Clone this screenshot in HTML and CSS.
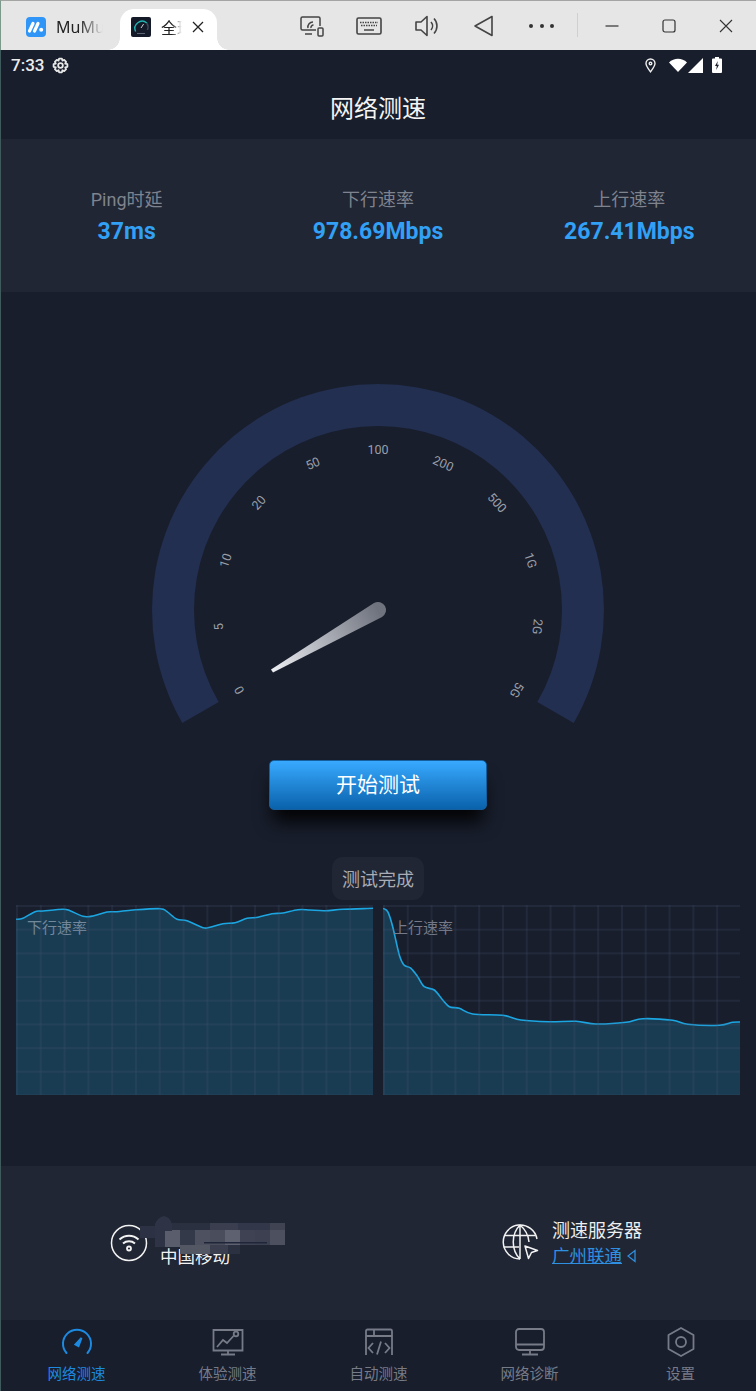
FILE: index.html
```html
<!DOCTYPE html>
<html lang="en">
<head>
    <meta charset="UTF-8">
    <meta name="viewport" content="width=device-width, initial-scale=1.0">
    <title>网络测速</title>
    <link rel="stylesheet" href="styles.css">
</head>
<body>
    <div class="titlebar">
        <div class="tab">
            <svg class="tab-icon" viewBox="0 0 20 20"><rect width="20" height="20" rx="4" fill="#2f95f7"/><path d="M3.500 14 L7 6.500 M8.500 14 L12 6.500" stroke="#fff" stroke-width="3.200" stroke-linecap="round"/><circle cx="15.200" cy="12.800" r="2" fill="#fff"/></svg>
            <span class="tab-name">MuMu</span>
        </div>
        <div class="tab tab-active">
            <svg class="tab-icon" viewBox="0 0 20 20"><rect width="20" height="20" rx="2" fill="#141a28"/><path d="M4.600 14.500 A7.200 7.200 0 0 1 15.800 6" fill="none" stroke="#1fb5b0" stroke-width="1.400"/><path d="M15.800 6 A7.200 7.200 0 0 1 16.400 13" fill="none" stroke="#3d4a5c" stroke-width="1.400"/><path d="M10 11 L12.600 7" stroke="#c8ccd4" stroke-width="1"/><rect x="6" y="16" width="8" height="1" fill="#5a6474"/></svg>
            <span class="tab-name tab-name-short">全球</span>
            <svg class="tab-close" viewBox="0 0 12 12"><path d="M1 1 L11 11 M11 1 L1 11" stroke="#222" stroke-width="1.300"/></svg>
        </div>
        <div class="tools">
            <div class="tool"><svg width="26" height="24" viewBox="0 0 26 24" fill="none" stroke="#444" stroke-width="1.500"><path d="M17 16 H3.500 A1.500 1.500 0 0 1 2 14.500 V4.500 A1.500 1.500 0 0 1 3.500 3 H19.500 A1.500 1.500 0 0 1 21 4.500 V12"/><path d="M6 20 H13"/><path d="M9 14 A5 5 0 0 1 14 8 M12 14 A2.500 2.500 0 0 1 14.500 11"/><rect x="19" y="14" width="5" height="8" rx="1"/></svg></div>
            <div class="tool"><svg width="26" height="20" viewBox="0 0 26 20" fill="none" stroke="#444"><rect x="1" y="2" width="24" height="16" rx="1.500" stroke-width="1.600"/><path d="M4 6.500 H22 M5 9.500 H21" stroke-width="1.600" stroke-dasharray="1.500 1"/><path d="M8 14 H18" stroke-width="1.500"/></svg></div>
            <div class="tool"><svg width="26" height="24" viewBox="0 0 26 24" fill="none" stroke="#444" stroke-width="1.600" stroke-linejoin="round"><path d="M2 8 H7 L13 2.500 V21.500 L7 16 H2 Z"/><path d="M17 8 A6 6 0 0 1 17 16 M20 4.500 A11 11 0 0 1 20 19.500"/></svg></div>
            <div class="tool"><svg width="22" height="24" viewBox="0 0 22 24" fill="none" stroke="#444" stroke-width="1.600" stroke-linejoin="round"><path d="M19 2.500 V21.500 L2 12 Z"/></svg></div>
            <div class="tool tool-dots"><span></span><span></span><span></span></div>
        </div>
        <div class="divider"></div>
        <div class="controls">
            <div class="control"><svg width="14" height="14" viewBox="0 0 14 14"><path d="M0.500 7 H13.500" stroke="#333" stroke-width="1.200"/></svg></div>
            <div class="control"><svg width="14" height="14" viewBox="0 0 14 14"><rect x="1" y="1" width="12" height="12" rx="2" fill="none" stroke="#333" stroke-width="1.200"/></svg></div>
            <div class="control"><svg width="14" height="14" viewBox="0 0 14 14"><path d="M1 1 L13 13 M13 1 L1 13" stroke="#333" stroke-width="1.100"/></svg></div>
        </div>
    </div>

    <div class="screen">
        <div class="statusbar">
            <span class="clock">7:33</span>
            <svg class="gear" width="17" height="17" viewBox="0 0 16 16" fill="none" stroke="#e8e8e8" stroke-width="1.700"><path d="M6.700 1.500 H9.300 L9.800 3.400 L11.500 2.700 L13.300 4.500 L12.400 6.200 L14.500 6.800 V9.200 L12.400 9.800 L13.300 11.500 L11.500 13.300 L9.800 12.400 L9.300 14.500 H6.700 L6.200 12.400 L4.500 13.300 L2.700 11.500 L3.600 9.800 L1.500 9.200 V6.800 L3.600 6.200 L2.700 4.500 L4.500 2.700 L6.200 3.400 Z" stroke-linejoin="round"/><circle cx="8" cy="8" r="2.200"/></svg>
            <div class="status-icons">
                <svg class="status-pin" width="11" height="15" viewBox="0 0 11 15" fill="none" stroke="#eee" stroke-width="1.400"><path d="M5.500 13.800 C3 10.500 1 8 1 5.500 A4.500 4.500 0 0 1 10 5.500 C10 8 8 10.500 5.500 13.800 Z"/><circle cx="5.500" cy="5.500" r="1.300"/></svg>
                <svg class="status-wifi" width="18" height="14" viewBox="0 0 18 14"><path d="M0 4.500 C5 -0.500 13 -0.500 18 4.500 L9 14 Z" fill="#fff"/></svg>
                <svg class="status-signal" width="15" height="15" viewBox="0 0 15 15"><path d="M15 0 V15 H0 Z" fill="#fff"/></svg>
                <svg class="status-battery" width="10" height="16" viewBox="0 0 10 16"><path d="M3 0 H7 V1.500 H9 A1 1 0 0 1 10 2.500 V15 A1 1 0 0 1 9 16 H1 A1 1 0 0 1 0 15 V2.500 A1 1 0 0 1 1 1.500 H3 Z" fill="#fff"/><path d="M5.800 4 L3 9 H4.800 L4.200 13 L7 7.800 H5.200 Z" fill="#181e2c"/></svg>
            </div>
        </div>

        <h1 class="page-title">网络测速</h1>

        <div class="stats">
            <div class="stat"><div class="stat-label">Ping时延</div><div class="stat-value">37ms</div></div>
            <div class="stat"><div class="stat-label">下行速率</div><div class="stat-value">978.69Mbps</div></div>
            <div class="stat"><div class="stat-label">上行速率</div><div class="stat-value">267.41Mbps</div></div>
        </div>

        <div class="main">
            <svg class="gauge" width="476" height="360" viewBox="140 380 476 360">
                <defs>
                    <linearGradient id="needle" gradientUnits="userSpaceOnUse" x1="272" y1="671" x2="378" y2="610">
                        <stop offset="0" stop-color="#eceef2"/>
                        <stop offset="1" stop-color="#6f737e"/>
                    </linearGradient>
                </defs>
                <path d="M182.300 723 A226 226 0 1 1 573.700 723 L537.300 702 A184 184 0 1 0 218.700 702 Z" fill="#222f50"/>
                <g class="gauge-labels">
                    <text x="378" y="454" transform="rotate(-120 378 610)">0</text>
                    <text x="378" y="454" transform="rotate(-96 378 610)">5</text>
                    <text x="378" y="454" transform="rotate(-72 378 610)">10</text>
                    <text x="378" y="454" transform="rotate(-48 378 610)">20</text>
                    <text x="378" y="454" transform="rotate(-24 378 610)">50</text>
                    <text x="378" y="454">100</text>
                    <text x="378" y="454" transform="rotate(24 378 610)">200</text>
                    <text x="378" y="454" transform="rotate(48 378 610)">500</text>
                    <text x="378" y="454" transform="rotate(72 378 610)">1G</text>
                    <text x="378" y="454" transform="rotate(96 378 610)">2G</text>
                    <text x="378" y="454" transform="rotate(120 378 610)">5G</text>
                </g>
                <path d="M271 669.500 L374 603 A8 8 0 0 1 382 617 L273 672.500 Z" fill="url(#needle)"/>
            </svg>

            <button class="start-btn">开始测试</button>
            <div class="done-pill">测试完成</div>

            <div class="charts">
                <div class="chart"><svg id="chartDown" viewBox="0 0 357 190" width="357" height="190"></svg><span class="chart-label">下行速率</span></div>
                <div class="chart"><svg id="chartUp" viewBox="0 0 357 190" width="357" height="190"></svg><span class="chart-label chart-label-up">上行速率</span></div>
            </div>
        </div>

        <div class="info">
            <div class="info-item info-left">
                <svg width="38" height="38" viewBox="0 0 38 38" fill="none" stroke="#f2f2f2" stroke-width="1.500"><circle cx="19" cy="19" r="17.500"/><path d="M9.500 15.500 C15 10.500 23 10.500 28.500 15.500 M13 19.500 C16.500 16.500 21.500 16.500 25 19.500" stroke-width="2"/><circle cx="19" cy="24.500" r="2" stroke-width="1.800"/></svg>
                <div class="carrier">中国移动</div>
            </div>
            <div class="info-item info-right">
                <svg width="37" height="37" viewBox="0 0 37 37" fill="none" stroke="#f2f2f2" stroke-width="1.500"><path d="M35 15 A17 17 0 1 0 18 35"/><path d="M18 1 C9 10 9 26 18 35 M18 1 C24 6 26.500 12 27 18 M18 1 V35 M2.500 11.500 H33.500 M1.500 23 H17"/><path d="M23 22 L35.500 26.500 L29.500 28.500 L26.500 34.500 Z" fill="#202634" stroke-linejoin="round"/></svg>
                <div>
                    <div class="server-title">测速服务器</div>
                    <div class="server-row"><a class="server-link">广州联通</a><svg width="9" height="14" viewBox="0 0 9 14" fill="none" stroke="#2f8fe0" stroke-width="1.300"><path d="M8 1.500 V12.500 L1 7 Z"/></svg></div>
                </div>
            </div>
            <svg class="mosaic" width="148" height="42" viewBox="138 1215 148 42">
                <rect x="140" y="1226" width="16" height="12" fill="#2c3243"/>
                <rect x="172" y="1223" width="38" height="8" fill="#2b3040"/>
                <rect x="210" y="1223" width="28" height="8" fill="#3a3e4e"/>
                <rect x="238" y="1223" width="32" height="8" fill="#32374a"/>
                <rect x="270" y="1223" width="15" height="8" fill="#3f4352"/>
                <rect x="165" y="1230" width="15" height="17" fill="#5a5e6c"/>
                <rect x="180" y="1230" width="15" height="15" fill="#34394a"/>
                <rect x="195" y="1230" width="15" height="15" fill="#4e5260"/>
                <rect x="210" y="1230" width="15" height="15" fill="#4a4e5c"/>
                <rect x="225" y="1230" width="15" height="15" fill="#5e616f"/>
                <rect x="240" y="1230" width="15" height="15" fill="#3e4252"/>
                <rect x="255" y="1230" width="15" height="15" fill="#3c4050"/>
                <rect x="270" y="1230" width="15" height="15" fill="#4d515f"/>
                <rect x="180" y="1245" width="30" height="9" fill="#535764"/>
                <rect x="210" y="1245" width="18" height="9" fill="#3a3e4e"/>
                <rect x="228" y="1245" width="12" height="9" fill="#2c3142"/>
                <rect x="204" y="1242" width="63" height="1.500" fill="#20263a"/>
                <path d="M155 1247 V1224 Q158 1217 164 1216 Q170 1217 172 1224 V1231 H165 V1247 Z" fill="#2e3445"/>
            </svg>
        </div>

        <div class="tabbar">
            <div class="nav-item nav-active">
                <svg width="32" height="28" viewBox="0 0 32 28" fill="none" stroke="#1c8ae0" stroke-width="2"><path d="M5.500 25 A14 14 0 1 1 26.500 25" stroke-linecap="round"/><path d="M14.500 16.500 L20.500 10 L17.500 18 Z" fill="#1c8ae0"/></svg>
                <span>网络测速</span>
            </div>
            <div class="nav-item">
                <svg width="32" height="28" viewBox="0 0 32 28" fill="none" stroke="#777b88" stroke-width="1.800"><path d="M22 2 H30.500 V22.500 H1.500 V2 H30.500"/><path d="M5 19 L11 12 L15 15 L21.500 8"/><circle cx="24" cy="6" r="2.300"/><path d="M16 22.500 V26 M9 26.500 H23"/></svg>
                <span>体验测速</span>
            </div>
            <div class="nav-item">
                <svg width="32" height="28" viewBox="0 0 32 28" fill="none" stroke="#777b88" stroke-width="1.800"><path d="M3 27 V3 A1.500 1.500 0 0 1 4.500 1.500 H27.500 A1.500 1.500 0 0 1 29 3 V27"/><path d="M3 8 H29 M11 1.500 V8"/><path d="M10 15 L5.500 20 L10 25 M22 15 L26.500 20 L22 25 M18 13.500 L14 26.500"/></svg>
                <span>自动测速</span>
            </div>
            <div class="nav-item">
                <svg width="32" height="28" viewBox="0 0 32 28" fill="none" stroke="#777b88" stroke-width="1.800"><rect x="2" y="1" width="28" height="21" rx="3"/><path d="M2 16.500 H30 M16 22 V26 M8 26.500 H24"/></svg>
                <span>网络诊断</span>
            </div>
            <div class="nav-item">
                <svg width="32" height="30" viewBox="0 0 32 30" fill="none" stroke="#777b88" stroke-width="1.800"><path d="M16 1 L28.500 8 V22 L16 29 L3.500 22 V8 Z" stroke-linejoin="round"/><circle cx="16" cy="15" r="5"/></svg>
                <span>设置</span>
            </div>
        </div>
    </div>

    <script>
        const downData = [[0,14.3],[7,13.3],[19,6.7],[27,6],[47,4.3],[54,5.7],[67,11.3],[77,11],[91,7],[101,6.7],[117,5],[144,3.7],[151,6.7],[161,14.3],[171,15.7],[187,22.7],[194,22.3],[207,18.7],[219,17.7],[231,13.3],[242,12.3],[256,8.7],[267,8],[282,4.7],[294,5],[309,5.7],[327,4.3],[357,3.3]];
        const upData = [[0,3.3],[4.7,6.7],[9.7,21.7],[16.3,50],[21,60],[28,63.3],[34.7,71.7],[41.3,81.7],[51.3,85],[59.7,95],[66.3,101.7],[76.3,103.3],[89.7,109],[119.7,110.3],[138,115],[166.3,116.7],[193,116.3],[213,119],[243,117.3],[259.7,113.7],[289.7,115.3],[304.7,119.3],[336.3,120.3],[349.7,117.3],[357,117]];

        // catmull-rom through the samples
        function smooth(points) {
            let d = `M${points[0][0]} ${points[0][1]}`;
            for (let i = 0; i < points.length - 1; i++) {
                const p0 = points[i - 1] || points[i];
                const p1 = points[i];
                const p2 = points[i + 1];
                const p3 = points[i + 2] || p2;
                const c1x = p1[0] + (p2[0] - p0[0]) / 6;
                const c1y = p1[1] + (p2[1] - p0[1]) / 6;
                const c2x = p2[0] - (p3[0] - p1[0]) / 6;
                const c2y = p2[1] - (p3[1] - p1[1]) / 6;
                d += ` C${c1x.toFixed(1)} ${c1y.toFixed(1)} ${c2x.toFixed(1)} ${c2y.toFixed(1)} ${p2[0]} ${p2[1]}`;
            }
            return d;
        }

        function drawChart(id, points) {
            const line = smooth(points);
            document.getElementById(id).innerHTML =
                `<path d="${line} L357 190 L0 190 Z" fill="#1a3c53"/>` +
                `<path d="${line}" fill="none" stroke="#1ba6e2" stroke-width="1.6"/>`;
        }

        drawChart('chartDown', downData);
        drawChart('chartUp', upData);
    </script>
</body>
</html>
```

FILE: styles.css
```css
* {
    box-sizing: border-box;
}
body {
    position: relative;
    margin: 0;
    width: 756px;
    height: 1391px;
    overflow: hidden;
    font-family: Roboto, "Noto Sans CJK SC", sans-serif;
    background-color: #181e2c;
    color: white;
}
/* thin window edge on the left */
body::after {
    content: "";
    position: absolute;
    left: 0;
    top: 50px;
    bottom: 0;
    width: 1px;
    background-color: #3f5a5c;
}

/* window chrome */
.titlebar {
    height: 50px;
    display: flex;
    align-items: flex-end;
    background-color: #e6e6e6;
    border-top: 1px solid #a3a5a3;
    border-left: 1px solid #7c9a8c;
    color: #222;
}
.tab {
    flex: none;
    width: 121px;
    height: 41px;
    padding: 0 0 5px 25px;
    display: flex;
    align-items: center;
    gap: 10px;
}
.tab-active {
    position: relative;
    width: 97px;
    margin-left: -2px;
    padding-left: 11px;
    background-color: white;
    border-radius: 14px 14px 0 0;
}
.tab-active::before,
.tab-active::after {
    content: "";
    position: absolute;
    bottom: 0;
    width: 12px;
    height: 12px;
}
.tab-active::before {
    left: -12px;
    background: radial-gradient(circle at 0 0, transparent 11.5px, white 12px);
}
.tab-active::after {
    right: -12px;
    background: radial-gradient(circle at 100% 0, transparent 11.5px, white 12px);
}
.tab-icon {
    flex: none;
    width: 20px;
    height: 20px;
}
.tab-name {
    width: 47px;
    overflow: hidden;
    white-space: nowrap;
    font-family: "Noto Sans", "Noto Sans CJK SC", sans-serif;
    font-size: 16px;
    -webkit-mask-image: linear-gradient(to right, black 50%, transparent 100%);
    mask-image: linear-gradient(to right, black 50%, transparent 100%);
}
.tab-name-short {
    width: 21px;
}
.tab-close {
    flex: none;
    width: 12px;
    height: 12px;
}
.tools {
    height: 49px;
    margin-left: 66px;
    display: flex;
}
.tool {
    width: 57.500px;
    display: flex;
    align-items: center;
    justify-content: center;
}
.tool-dots {
    gap: 6.500px;
}
.tool-dots span {
    width: 4px;
    height: 4px;
    border-radius: 50%;
    background-color: #333;
}
.divider {
    width: 1px;
    height: 24px;
    margin: 0 6px 13px 6px;
    background-color: #d0d0d0;
}
.controls {
    height: 49px;
    display: flex;
}
.control {
    width: 57px;
    display: flex;
    align-items: center;
    justify-content: center;
}

/* phone screen */
.screen {
    height: 1341px;
    display: flex;
    flex-direction: column;
}
.statusbar {
    height: 30px;
    padding-left: 11px;
    display: flex;
    align-items: center;
    gap: 8px;
}
.clock {
    font-size: 17px;
    font-weight: 500;
    color: #ececec;
}
.status-icons {
    margin-left: auto;
    padding-right: 34px;
    display: flex;
    align-items: center;
}
.status-pin {
    margin-right: 13px;
}
.status-signal {
    margin: 0 9px 0 1px;
}
.page-title {
    height: 59px;
    margin: 0;
    padding-bottom: 6px;
    display: flex;
    align-items: center;
    justify-content: center;
    font-size: 24px;
    font-weight: 400;
    color: #f4f4f4;
}
.stats {
    height: 153px;
    padding: 48px 1px 0;
    display: grid;
    grid-template-columns: repeat(3, 1fr);
    text-align: center;
    background-color: #202634;
}
.stat-label {
    font-size: 18px;
    line-height: 26px;
    color: #7f838e;
}
.stat-value {
    padding-top: 2px;
    font-size: 23px;
    font-weight: 700;
    line-height: 34px;
    color: #32a0f5;
}

.main {
    height: 874px;
    padding-top: 88px;
    display: flex;
    flex-direction: column;
    align-items: center;
}
.gauge {
    display: block;
    flex: none;
}
.gauge-labels text {
    font-size: 12.500px;
    text-anchor: middle;
    fill: #9a9ea8;
}
.start-btn {
    width: 218px;
    height: 50px;
    margin-top: 20px;
    padding-bottom: 5px;
    flex: none;
    border: 1px solid #155f9e;
    border-radius: 5px;
    background: linear-gradient(to bottom, #38aaff, #0a62ab);
    box-shadow: 0 16px 18px -4px rgba(0, 0, 0, 0.9);
    color: white;
    font-family: inherit;
    font-size: 21px;
}
.done-pill {
    width: 92px;
    height: 43px;
    margin-top: 47px;
    padding-bottom: 2px;
    flex: none;
    display: flex;
    align-items: center;
    justify-content: center;
    border-radius: 11px;
    background-color: #202634;
    font-size: 18px;
    color: #a9acb4;
}
.charts {
    margin-top: 5px;
    width: 724px;
    display: flex;
    justify-content: space-between;
}
.chart {
    position: relative;
    width: 357px;
    height: 190px;
}
.chart svg {
    display: block;
}
.chart::after {
    content: "";
    position: absolute;
    inset: 0;
    background-image:
        linear-gradient(to right, rgba(70, 85, 115, 0.2) 1.5px, transparent 1.5px),
        linear-gradient(to bottom, rgba(70, 85, 115, 0.2) 1.5px, transparent 1.5px);
    background-size: 23.800px 23.700px;
}
.chart-label {
    position: absolute;
    left: 11px;
    top: 11px;
    font-size: 15px;
    color: #73889a;
}
.chart-label-up {
    left: 10px;
    color: #777b88;
}

.info {
    position: relative;
    height: 154px;
    display: grid;
    grid-template-columns: 1fr 1fr;
    background-color: #202634;
}
.info-item {
    padding-top: 58px;
    display: flex;
}
.info-left {
    padding-left: 110px;
    gap: 12px;
}
.info-right {
    padding-left: 124px;
    padding-top: 52px;
    gap: 13px;
}
.info-right > svg {
    margin-top: 6px;
}
.carrier {
    margin-top: 21px;
    font-size: 17.500px;
    line-height: 24px;
    color: #f2f2f2;
}
.server-title {
    font-size: 18px;
    line-height: 26px;
    color: #eeeeee;
}
.server-row {
    display: flex;
    align-items: center;
    gap: 5px;
}
.server-link {
    font-size: 17.500px;
    line-height: 24px;
    color: #2f8fe0;
    text-decoration: underline;
}
.mosaic {
    position: absolute;
    left: 138px;
    top: 49px;
}

.tabbar {
    flex: 1;
    padding-left: 1px;
    display: grid;
    grid-template-columns: repeat(5, 1fr);
}
.nav-item {
    padding-top: 7px;
    display: flex;
    flex-direction: column;
    align-items: center;
    font-size: 14.500px;
    color: #777b88;
}
.nav-item svg {
    flex: none;
    height: 30px;
}
.nav-item span {
    margin-top: 5px;
}
.nav-active {
    color: #1c8ae0;
}
```
